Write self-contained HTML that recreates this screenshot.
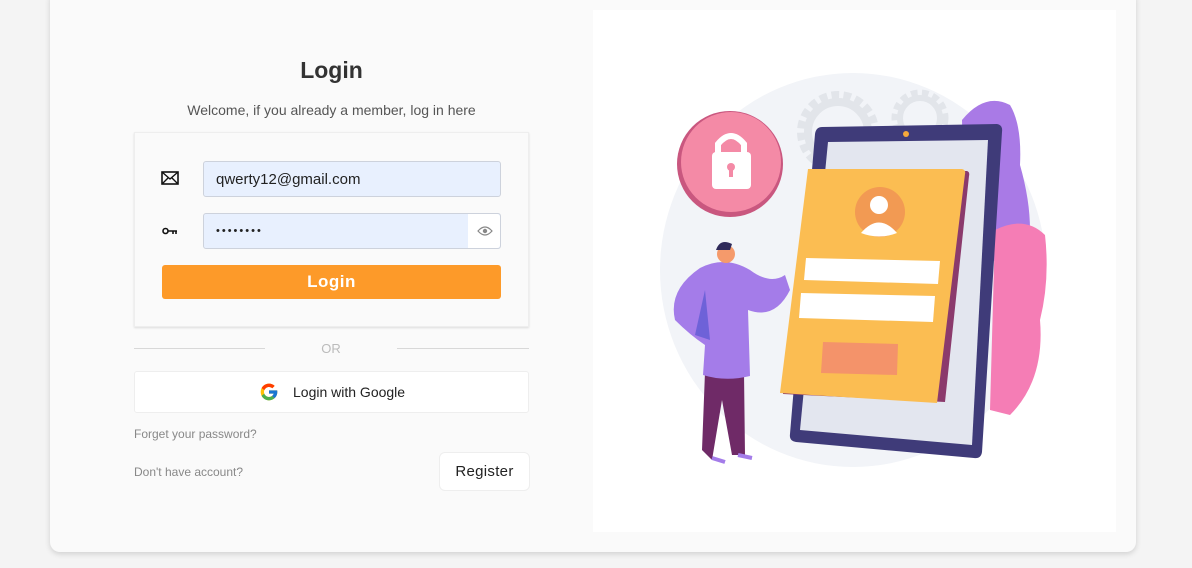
<!DOCTYPE html>
<html><head><meta charset="utf-8"><style>
*{box-sizing:border-box;margin:0;padding:0}
body{width:1192px;height:568px;background:#f4f4f4;font-family:"Liberation Sans",sans-serif;position:relative;overflow:hidden}
.card{position:absolute;left:50px;top:-10px;width:1086px;height:562px;background:#fafafa;border-radius:10px;box-shadow:0 2px 6px rgba(0,0,0,.15)}
.abs{position:absolute}
h1{position:absolute;left:134px;width:395px;top:57px;text-align:center;font-size:23px;color:#333;font-weight:bold}
.sub{left:134px;width:395px;top:102px;text-align:center;font-size:14px;color:#555}
.box{left:134px;top:132px;width:395px;height:195px;background:#fafafa;border:1px solid #eee;box-shadow:0 1px 2px rgba(0,0,0,.12)}
.inp{left:203px;width:298px;height:36px;background:#e8f0fe;border:1px solid #cdd2dc;border-radius:3px;font-size:15px;color:#222;padding:9px 0 0 12px}
.btn{left:162px;top:265px;width:339px;height:34px;background:#fd9a29;border-radius:3px;color:#fff;font-weight:bold;font-size:17px;text-align:center;line-height:34px;letter-spacing:.5px}
.line{height:1px;background:#d8d8d8;top:348px}
.g{left:134px;top:371px;width:395px;height:42px;background:#fff;border:1px solid #eee;border-radius:3px;font-size:14px;color:#222}
.lnk{font-size:12px;color:#888;left:134px}
.reg{left:439px;top:452px;width:91px;height:39px;background:#fff;border:1px solid #eee;border-radius:6px;font-size:15px;color:#222;text-align:center;line-height:37px;letter-spacing:.3px}
.panel{left:593px;top:10px;width:523px;height:522px;background:#fff}
</style></head><body>
<div class="card"></div>
<h1>Login</h1>
<div class="abs sub">Welcome, if you already a member, log in here</div>
<div class="abs box"></div>
<svg class="abs" style="left:161px;top:171px" width="18" height="14" viewBox="0 0 18 14"><rect x="1" y="1" width="16" height="12" fill="none" stroke="#111" stroke-width="1.6"/><path d="M1 1L9 8L17 1M1 13L7 7M17 13L11 7" fill="none" stroke="#111" stroke-width="1.4"/></svg>
<svg class="abs" style="left:162px;top:226px" width="16" height="10" viewBox="0 0 16 10"><circle cx="3.5" cy="5" r="2.5" fill="none" stroke="#111" stroke-width="1.6"/><path d="M6 5H15M11 5V8M14 5V8" stroke="#111" stroke-width="1.6" fill="none"/></svg>
<div class="abs inp" style="top:161px">qwerty12@gmail.com</div>
<div class="abs inp" style="top:213px;font-size:11px;letter-spacing:2px;padding-top:11px">••••••••</div>
<div class="abs" style="left:468px;top:214px;width:32px;height:34px;background:#fff;border-radius:0 3px 3px 0"></div>
<svg class="abs" style="left:477px;top:225px" width="16" height="12" viewBox="0 0 16 12"><path d="M1 6Q8 -2 15 6Q8 14 1 6Z" fill="none" stroke="#888" stroke-width="1.2"/><circle cx="8" cy="6" r="2.2" fill="#888"/></svg>
<div class="abs btn">Login</div>
<div class="abs line" style="left:134px;width:131px"></div>
<div class="abs line" style="left:397px;width:132px"></div>
<div class="abs" style="left:265px;width:132px;top:341px;text-align:center;font-size:13px;color:#bbb">OR</div>
<div class="abs g"></div>
<svg class="abs" style="left:259px;top:382px" width="20" height="20" viewBox="0 0 48 48"><path fill="#FFC107" d="M43.6 20H24v8h11.3C33.7 32.7 29.2 36 24 36c-6.6 0-12-5.4-12-12s5.4-12 12-12c3 0 5.8 1.1 7.9 3l5.7-5.7C34 6 29.3 4 24 4 13 4 4 13 4 24s9 20 20 20 20-9 20-20c0-1.3-.1-2.7-.4-4z"/><path fill="#FF3D00" d="M6.3 14.7l6.6 4.8C14.7 15.1 19 12 24 12c3 0 5.8 1.1 7.9 3l5.7-5.7C34 6 29.3 4 24 4 16.3 4 9.7 8.3 6.3 14.7z"/><path fill="#4CAF50" d="M24 44c5.2 0 9.9-2 13.4-5.2l-6.2-5.2C29.2 35.1 26.7 36 24 36c-5.2 0-9.6-3.3-11.3-8l-6.5 5C9.5 39.6 16.2 44 24 44z"/><path fill="#1976D2" d="M43.6 20H24v8h11.3c-.8 2.2-2.2 4.2-4.1 5.6l6.2 5.2C37 39.2 44 34 44 24c0-1.3-.1-2.7-.4-4z"/></svg>
<div class="abs" style="left:293px;top:384px;font-size:14px;color:#222">Login with Google</div>
<div class="abs lnk" style="top:427px">Forget your password?</div>
<div class="abs lnk" style="top:465px">Don't have account?</div>
<div class="abs reg">Register</div>
<div class="abs panel"></div>
<svg class="abs" style="left:0;top:0" width="1192" height="568" viewBox="0 0 1192 568">
<ellipse cx="853" cy="270" rx="193" ry="197" fill="#f2f4f8"/>
<circle cx="838" cy="132" r="34" fill="none" stroke="#e2e5ea" stroke-width="14" stroke-dasharray="7 4"/>
<circle cx="838" cy="132" r="30" fill="none" stroke="#e2e5ea" stroke-width="8"/>
<circle cx="920" cy="118" r="23" fill="none" stroke="#e2e5ea" stroke-width="11" stroke-dasharray="6 4"/>
<circle cx="920" cy="118" r="20" fill="none" stroke="#e2e5ea" stroke-width="6"/>
<path d="M962 120Q985 92 1010 105Q1022 125 1020 165Q1030 200 1030 230L1000 265L965 240Z" fill="#a97ae6"/>
<path d="M995 230Q1025 215 1045 235Q1050 280 1040 320Q1045 380 1010 415L990 410Z" fill="#f57db5"/>
<path d="M822 127L997 124Q1003 125 1002 132L982 452Q981 459 974 458L796 442Q789 441 790 434L815 134Q816 127 822 127Z" fill="#3f3b79"/>
<path d="M828 142L988 140L972 445L800 430Z" fill="#e3e6ef"/>
<circle cx="906" cy="134" r="3" fill="#f6a93b"/>
<path d="M812 171L967 171Q970 172 969 176L945 402L783 394Z" fill="#8b3a6c"/>
<path d="M808 169L962 169Q966 170 965 174L937 403L780 393Z" fill="#fbbd52"/>
<circle cx="880" cy="212" r="25" fill="#f29a53"/>
<circle cx="879" cy="205" r="9" fill="#fff"/>
<path d="M861 233Q879 212 897 233Q879 240 861 233Z" fill="#fff"/>
<path d="M806 258L940 261L938 284L804 280Z" fill="#fff"/>
<path d="M801 293L935 296L933 322L799 318Z" fill="#fff"/>
<path d="M823 342L898 344L897 375L821 373Z" fill="#f4936a"/>
<circle cx="730" cy="164" r="53" fill="#c9577f"/>
<circle cx="731" cy="162" r="50" fill="#f48aa6"/>
<path d="M718 154V144Q731 128 744 144V154" fill="none" stroke="#fff" stroke-width="6"/>
<rect x="712" y="152" width="39" height="37" rx="4" fill="#fff"/>
<circle cx="731" cy="167" r="4" fill="#f48aa6"/><rect x="729" y="167" width="4" height="10" fill="#f48aa6"/>
<path d="M705 372L702 450L712 460L722 400L732 455L745 455L744 372Z" fill="#6f2a67"/>
<path d="M700 268Q725 255 750 270Q770 285 785 275L790 290Q775 320 748 310L750 376Q725 382 703 375L705 345Q690 335 675 320Q668 290 700 268Z" fill="#a47ce9"/>
<path d="M705 290L695 335L710 340Z" fill="#6e62d8"/>
<circle cx="726" cy="254" r="9" fill="#f59a6b"/>
<path d="M716 250Q720 238 732 244L730 250Z" fill="#2f2a5a"/>
<path d="M712 458L725 462M738 455L752 458" stroke="#a47ce9" stroke-width="4"/>
</svg>
</body></html>
